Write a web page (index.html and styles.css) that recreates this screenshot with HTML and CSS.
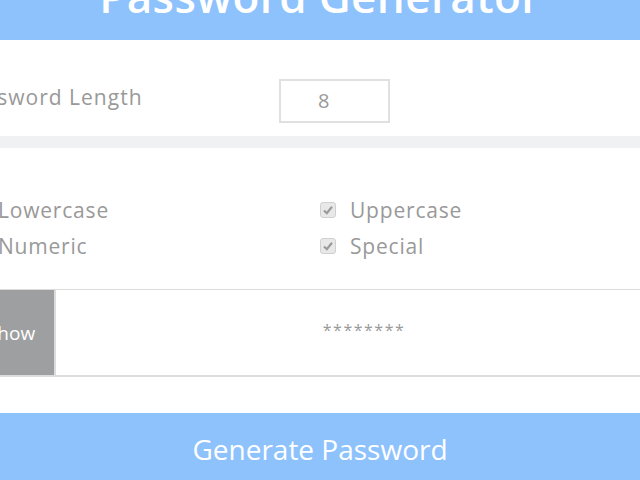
FILE: index.html
```html
<!DOCTYPE html>
<html>
<head>
<meta charset="utf-8">
<link rel="stylesheet" href="styles.css">
</head>
<body>
<div class="app">
  <header class="header"><h1 class="title">Password Generator</h1></header>
  <section class="length-row">
    <label class="length-label" for="len">Password Length</label>
    <div class="length-input" id="len">8</div>
  </section>
  <div class="band"></div>
  <section class="options">
    <div class="opt"><span class="box"></span><span class="opt-text">Lowercase</span></div>
    <div class="opt"><span class="box checked"><svg viewBox="0 0 16 16" width="16" height="16"><path d="M4 8.5 L6.8 11.2 L12 4.8" fill="none" stroke="#9a9a9a" stroke-width="2.2"/></svg></span><span class="opt-text">Uppercase</span></div>
    <div class="opt"><span class="box"></span><span class="opt-text">Numeric</span></div>
    <div class="opt"><span class="box checked"><svg viewBox="0 0 16 16" width="16" height="16"><path d="M4 8.5 L6.8 11.2 L12 4.8" fill="none" stroke="#9a9a9a" stroke-width="2.2"/></svg></span><span class="opt-text">Special</span></div>
  </section>
  <section class="output-row">
    <button class="show-btn">Show</button>
    <div class="output">********</div>
  </section>
  <div class="gen-wrap">
    <button class="gen-btn">Generate Password</button>
  </div>
</div>
</body>
</html>
```
FILE: styles.css
```css
html, body {
  margin: 0;
  padding: 0;
  overflow: hidden;
  background: #fff;
}
body {
  font-family: "Open Sans", "Noto Sans", sans-serif;
  color: #999;
}
.app {
  width: 704px;
  margin-left: -32px;
}
.header {
  background: #8ec2fd;
  height: 80px;
  margin-top: -40px;
  display: flex;
  justify-content: center;
  align-items: flex-start;
}
.title {
  margin: 0;
  color: #fff;
  font-size: 44px;
  font-weight: 600;
  line-height: 1;
  padding-top: 14px;
  letter-spacing: 0.4px;
}
.length-row {
  display: flex;
  align-items: center;
  padding: 39px 0 13px 0;
}
.length-label {
  width: 311px;
  font-size: 21px;
  letter-spacing: 1px;
  text-indent: -8px;
  color: #999;
  margin-bottom: 8px;
}
.length-input {
  box-sizing: border-box;
  width: 111px;
  height: 44px;
  border: 2px solid #e0e0e0;
  text-align: left;
  padding-left: 37px;
  font-size: 20px;
  line-height: 40px;
  color: #999;
}
.band {
  height: 12px;
  background: #f0f1f2;
}
.options {
  display: grid;
  grid-template-columns: 352px 352px;
  padding: 44px 0 25px 0;
}
.opt {
  height: 36px;
  display: flex;
  align-items: center;
  gap: 14px;
  font-size: 21px;
  letter-spacing: 0.8px;
}
.box {
  box-sizing: border-box;
  width: 16px;
  height: 16px;
  border: 1px solid #d0d0d0;
  border-radius: 3px;
  background: #e8e8e8;
  display: flex;
}
.box svg {
  margin: -1px;
}
.opt-text {
  color: #999;
}
.output-row {
  display: flex;
  border-top: 1px solid #dcdcdc;
  border-bottom: 2px solid #dcdcdc;
  height: 85px;
}
.show-btn {
  width: 88px;
  border: 0;
  border-right: 2px solid #dcdcdc;
  background: #9e9fa0;
  color: #fff;
  font-family: inherit;
  font-size: 19px;
  padding: 0;
}
.output {
  flex: 1;
  display: flex;
  align-items: center;
  justify-content: center;
  font-size: 16px;
  letter-spacing: 1.5px;
  color: #999;
  padding-bottom: 6px;
}
.gen-wrap {
  padding-top: 36px;
}
.gen-btn {
  width: 100%;
  height: 80px;
  border: 0;
  background: #8ec2fd;
  color: #fff;
  font-family: inherit;
  font-size: 28px;
  padding: 0 0 8px 0;
}
```
